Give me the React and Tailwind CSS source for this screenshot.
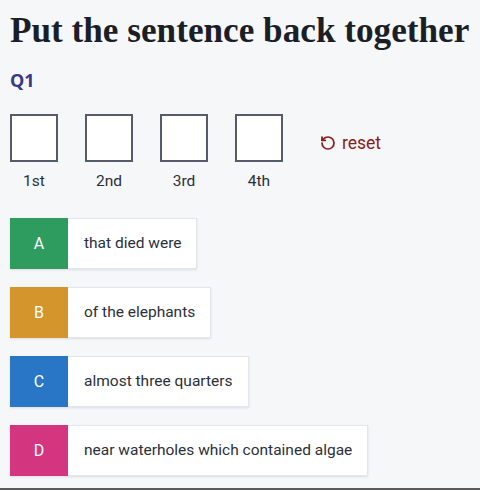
import React from 'react';
import { RotateCcw } from 'lucide-react';

const slots = ['1st', '2nd', '3rd', '4th'];

const parts = [
  { key: 'A', text: 'that died were', color: 'bg-[#2e9b5f]' },
  { key: 'B', text: 'of the elephants', color: 'bg-[#d4962c]' },
  { key: 'C', text: 'almost three quarters', color: 'bg-[#2a76c6]' },
  { key: 'D', text: 'near waterholes which contained algae', color: 'bg-[#d4357f]' },
];

export default function App() {
  return (
    <div className="w-[480px] h-[490px] bg-[#f6f7f9] border-b-2 border-[#5a5a5a] overflow-hidden font-['Roboto',sans-serif]">
      <div className="pl-[10px] pt-[9px]">
        {/* Title */}
        <h1 className="whitespace-nowrap font-['Liberation_Serif',serif] font-bold text-[35.2px] leading-[44px] text-[#1b1e27]">
          Put the sentence back together
        </h1>

        {/* Question number */}
        <div className="mt-[15px] font-['Open_Sans',sans-serif] font-bold text-[18px] leading-[24px] text-[#3b3789]">Q1</div>

        {/* Answer slots */}
        <div className="mt-[22px] flex items-start">
          {slots.map((s) => (
            <div key={s} className="w-[48px] mr-[27px] flex flex-col items-center">
              <div className="w-[48px] h-[48px] bg-white border-2 border-[#565b69]" />
              <div className="mt-[9px] text-[15.5px] leading-[20px] text-[#2b2f38]">{s}</div>
            </div>
          ))}
          <button className="ml-[10px] mt-[19px] flex items-center gap-[6px] text-[#8b1a1a] text-[17.5px] leading-[20px]">
            <RotateCcw size={16} strokeWidth={2.6} />
            reset
          </button>
        </div>

        {/* Sentence fragments */}
        <div className="mt-[27px] flex flex-col gap-[18px] items-start">
          {parts.map((p) => (
            <div key={p.key} className="flex h-[51px] shadow-[0_1px_2px_rgba(30,40,70,0.12)]">
              <div className={`w-[58px] ${p.color} flex items-center justify-center text-white text-[16px]`}>{p.key}</div>
              <div className="bg-white border border-l-0 border-[#e1e6ef] flex items-center pl-[16px] pr-[15px] text-[15.5px] text-[#2b2f3a]">
                {p.text}
              </div>
            </div>
          ))}
        </div>
      </div>
    </div>
  );
}
